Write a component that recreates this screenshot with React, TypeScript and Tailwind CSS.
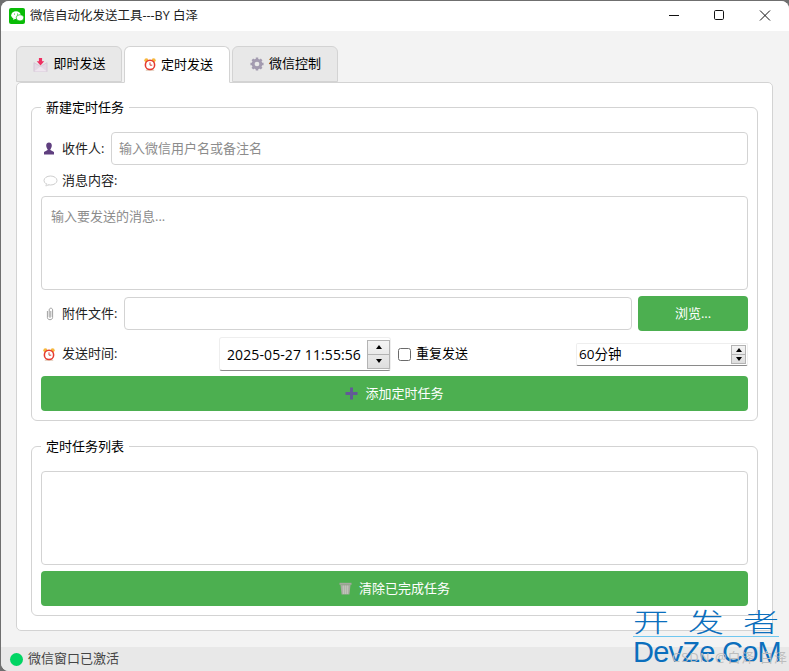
import type { ReactNode } from 'react';

const FONT = '[font-family:"Open_Sans","Noto_Sans_CJK_SC",sans-serif]';

function MailIcon() {
  return (
    <svg width="15" height="15" viewBox="0 0 16 16">
      <path d="M1 6 L8 10 L15 6 V15.5 H1 Z" fill="#e4d8e4" stroke="#c9b8cb" strokeWidth="0.6" />
      <path d="M1 15.5 L8 10 L15 15.5 Z" fill="#efe6ef" />
      <path d="M6.3 1 H9.7 V4.5 H12 L8 9 L4 4.5 H6.3 Z" fill="#ee2f62" />
    </svg>
  );
}

function AlarmIcon({ className = '' }: { className?: string }) {
  return (
    <svg width="12" height="15" viewBox="0 0 14 16" className={className}>
      <circle cx="2.8" cy="3" r="2.4" fill="#f6b73c" />
      <circle cx="11.2" cy="3" r="2.4" fill="#f6b73c" />
      <rect x="2" y="13.5" width="10" height="2.2" rx="1" fill="#e8d6c8" />
      <circle cx="7" cy="8.5" r="5.4" fill="#fff" stroke="#e6392f" strokeWidth="1.8" />
      <path d="M7 5.5 V8.8 H9.6" fill="none" stroke="#d9342b" strokeWidth="1.1" />
    </svg>
  );
}

function GearIcon() {
  return (
    <svg width="14" height="14" viewBox="0 0 16 16">
      <circle cx="8" cy="8" r="4.4" fill="none" stroke="#a39bb0" strokeWidth="3.4" />
      <path
        d="M8 0.5 V3 M8 13 V15.5 M0.5 8 H3 M13 8 H15.5 M2.7 2.7 L4.5 4.5 M11.5 11.5 L13.3 13.3 M2.7 13.3 L4.5 11.5 M11.5 4.5 L13.3 2.7"
        stroke="#a39bb0"
        strokeWidth="2.8"
      />
    </svg>
  );
}

function PersonIcon() {
  return (
    <svg width="12" height="13" viewBox="0 0 12 13">
      <path d="M3.2 3.6 C3.2 1.6 4.3 0.4 6 0.4 C7.7 0.4 8.8 1.6 8.8 3.6 C8.8 5.4 7.9 6.8 7.4 7.3 V8 L11 10 V12.6 H1 V10 L4.6 8 V7.3 C4.1 6.8 3.2 5.4 3.2 3.6 Z" fill="#5f3f7f" />
    </svg>
  );
}

function BubbleIcon() {
  return (
    <svg width="15" height="12" viewBox="0 0 15 12">
      <ellipse cx="7.5" cy="5.5" rx="6.5" ry="4.5" fill="#fff" stroke="#c8c8c8" strokeWidth="0.9" />
      <path d="M3.5 9 L2.8 11 L6 9.8" fill="#fff" stroke="#c8c8c8" strokeWidth="0.7" />
    </svg>
  );
}

function ClipIcon() {
  return (
    <svg width="8" height="14" viewBox="0 0 8 14" className="ml-[3px]">
      <path d="M1.4 4 V10.5 C1.4 13.4 6.6 13.4 6.6 10.5 V3 C6.6 0.6 3.2 0.6 3.2 3 V9.5 C3.2 10.6 4.8 10.6 4.8 9.5 V4" fill="none" stroke="#a0a0a0" strokeWidth="1" />
    </svg>
  );
}

function TrashIcon() {
  return (
    <svg width="13" height="13" viewBox="0 0 13 13">
      <rect x="0.5" y="0.8" width="12" height="2" fill="#a7a7a0" />
      <path d="M1.5 3 H11.5 L10.4 12.6 H2.6 Z" fill="#a7aaa0" />
      <path d="M3 5 H10 M3.2 7 H9.8 M3.4 9 H9.6 M3.6 11 H9.4 M4.5 3.5 V12 M6.5 3.5 V12 M8.5 3.5 V12" stroke="#c9cdc2" strokeWidth="0.6" />
    </svg>
  );
}

function Tab({ icon, label, active }: { icon: ReactNode; label: string; active?: boolean }) {
  return (
    <div
      className={`flex h-[36px] w-[106px] items-center justify-center gap-[5px] rounded-t-[6px] border border-[#d3d3d3] pl-px text-[13px] text-black ${
        active ? 'z-10 -mb-px h-[37px] border-b-white bg-white' : 'bg-[#e8e8e8]'
      }`}
    >
      {icon}
      <span>{label}</span>
    </div>
  );
}

function Label({ icon, children }: { icon: ReactNode; children: ReactNode }) {
  return (
    <div className="flex shrink-0 items-center text-[13px] text-[#222]">
      <span className="flex w-[21px] items-center justify-start pl-[2px]">{icon}</span>
      <span>{children}</span>
    </div>
  );
}

function GreenButton({ children, className = '' }: { children: ReactNode; className?: string }) {
  return (
    <button className={`flex items-center justify-center gap-[7px] rounded-[4px] bg-[#4caf50] text-[13px] text-white ${className}`}>
      {children}
    </button>
  );
}

function Group({ title, children, className = '' }: { title: string; children: ReactNode; className?: string }) {
  return (
    <fieldset className={`rounded-[6px] border border-[#d3d3d3] px-[9px] ${className}`}>
      <legend className="h-[18px] px-[5px] text-[13px] leading-[18px] text-black">{title}</legend>
      {children}
    </fieldset>
  );
}

function SpinArrows({ small }: { small?: boolean }) {
  return (
    <div className={`flex shrink-0 flex-col border border-[#b4b4b4] bg-gradient-to-b from-[#f4f4f4] to-[#dedede] ${small ? 'h-[19px] w-[15px]' : 'h-[29px] w-[23px]'}`}>
      <div className="flex flex-1 items-center justify-center border-b border-[#b4b4b4]">
        <div className="h-0 w-0 border-x-[3.5px] border-b-[4px] border-x-transparent border-b-black" />
      </div>
      <div className="flex flex-1 items-center justify-center">
        <div className="h-0 w-0 border-x-[3.5px] border-t-[4px] border-x-transparent border-t-black" />
      </div>
    </div>
  );
}

export default function App() {
  return (
    <div className={`relative h-[671px] w-[789px] overflow-hidden bg-[#6f6f6f] pl-px pt-px ${FONT}`}>
      <div className="flex h-[670px] flex-col overflow-hidden rounded-t-[8px] rounded-bl-[8px] bg-[#f3f3f3]">
        <header className="flex h-[30px] shrink-0 items-center bg-white">
          <div className="ml-[8px] flex h-[16px] w-[16px] items-center justify-center rounded-[2px] bg-[#09bb07]">
            <svg width="13" height="11" viewBox="0 0 13 11">
              <ellipse cx="5" cy="4.2" rx="4.8" ry="3.9" fill="#fff" />
              <path d="M2.5 7 L2.3 9 L4.8 7.6 Z" fill="#fff" />
              <ellipse cx="9" cy="6.8" rx="3.8" ry="3.1" fill="#fff" stroke="#09bb07" strokeWidth="0.7" />
              <circle cx="3.5" cy="3" r="0.6" fill="#09bb07" />
              <circle cx="6.5" cy="3" r="0.6" fill="#09bb07" />
            </svg>
          </div>
          <span className="ml-[5px] text-[12.5px] text-[#222]">微信自动化发送工具---BY 白泽</span>
          <div className="ml-auto flex items-center">
            <svg width="46" height="30" viewBox="0 0 46 30">
              <path d="M20 14.5 H30" stroke="#111" strokeWidth="1" />
            </svg>
            <svg width="46" height="30" viewBox="0 0 46 30">
              <rect x="19.5" y="9.5" width="9" height="9" rx="1.2" fill="none" stroke="#111" strokeWidth="1" />
            </svg>
            <svg width="46" height="30" viewBox="0 0 46 30" className="mr-[2px]">
              <path d="M19 9.5 L29 19.5 M29 9.5 L19 19.5" stroke="#111" strokeWidth="1" />
            </svg>
          </div>
        </header>

        <div className="flex-1 px-[15px] pt-[15px]">
          <div className="flex gap-[2px]">
            <Tab icon={<MailIcon />} label="即时发送" />
            <Tab icon={<AlarmIcon className="ml-[2px]" />} label="定时发送" active />
            <Tab icon={<GearIcon />} label="微信控制" />
          </div>

          <div className="flex h-[549px] w-[757px] flex-col gap-[16px] rounded-[5px] border border-[#d3d3d3] bg-white px-[14px] pt-[15px]">
            <Group title="新建定时任务" className="h-[323px]">
              <div className="mt-[16px] flex h-[33px] items-center">
                <div className="w-[70px]">
                  <Label icon={<PersonIcon />}>收件人:</Label>
                </div>
                <div className="flex h-full flex-1 items-center rounded-[4px] border border-[#d3d3d3] pl-[7px] text-[13px] text-[#8c8c8c]">
                  输入微信用户名或备注名
                </div>
              </div>
              <div className="mt-[7px] flex h-[18px] items-center">
                <Label icon={<BubbleIcon />}>消息内容:</Label>
              </div>
              <div className="mt-[6px] h-[94px] rounded-[4px] border border-[#d3d3d3] pl-[9px] pt-[9px] text-[13px] leading-[20px] text-[#8c8c8c]">
                输入要发送的消息...
              </div>
              <div className="mt-[6px] flex h-[35px] items-center">
                <div className="w-[83px]">
                  <Label icon={<ClipIcon />}>附件文件:</Label>
                </div>
                <div className="h-[33px] w-[508px] rounded-[4px] border border-[#d3d3d3]" />
                <GreenButton className="ml-[6px] h-[35px] w-[110px]">浏览...</GreenButton>
              </div>
              <div className="mt-[6px] flex h-[34px] items-center">
                <div className="w-[178px]">
                  <Label icon={<AlarmIcon />}>发送时间:</Label>
                </div>
                <div className="flex h-[34px] w-[172px] items-center justify-between rounded-[3px] border border-[#eeeeee] border-b-[#8a8a8a] bg-white pl-[7px] text-[14px] tracking-[0.1px] text-black">
                  <span>2025-05-27 11:55:56</span>
                  <SpinArrows />
                </div>
                <div className="ml-[7px] h-[13px] w-[13px] rounded-[2.5px] border border-[#6a6a6a] bg-white" />
                <span className="ml-[5px] text-[13px] text-black">重复发送</span>
                <div className="ml-auto flex h-[23px] w-[172px] items-center justify-between rounded-[2px] border border-[#eeeeee] border-b-[#8a8a8a] bg-white pl-[2px] pr-px text-[13.5px] text-black">
                  <span>60分钟</span>
                  <SpinArrows small />
                </div>
              </div>
              <GreenButton className="mt-[5px] h-[35px] w-full">
                <svg width="13" height="13" viewBox="0 0 13 13">
                  <path d="M6.5 0.5 V12.5 M0.5 6.5 H12.5" stroke="#625b96" strokeWidth="3" />
                </svg>
                <span>添加定时任务</span>
              </GreenButton>
            </Group>

            <Group title="定时任务列表" className="h-[179px]">
              <div className="mt-[16px] h-[94px] rounded-[4px] border border-[#d3d3d3]" />
              <GreenButton className="mt-[6px] h-[35px] w-full">
                <TrashIcon />
                <span>清除已完成任务</span>
              </GreenButton>
            </Group>
          </div>
        </div>

        <footer className="flex h-[24px] shrink-0 items-center bg-[#e8e8e8] pl-[9px]">
          <div className="h-[13px] w-[13px] rounded-full bg-[#00d563]" />
          <span className="ml-[5px] text-[13px] text-[#444]">微信窗口已激活</span>
        </footer>
      </div>

      <div className="absolute left-[633px] top-[605px] w-[146px] text-[#0b6fbd]">
        <div className="flex h-[32px] justify-between border-b border-[#6fc7f0] text-[36px] font-light leading-[30px] [font-family:'Noto_Sans_CJK_SC',sans-serif]">
          <span className="scale-y-[0.72]">开</span>
          <span className="scale-y-[0.72]">发</span>
          <span className="scale-y-[0.72]">者</span>
        </div>
        <div className="whitespace-nowrap text-[29px] leading-[30px] tracking-[-0.75px] [font-family:'Liberation_Sans',sans-serif]">DevZe.CoM</div>
      </div>
      <span className="absolute left-[672px] top-[648px] whitespace-nowrap text-[13px] tracking-[1px] text-[#bdbdbd]">CSDN @白泽 白泽</span>
    </div>
  );
}
